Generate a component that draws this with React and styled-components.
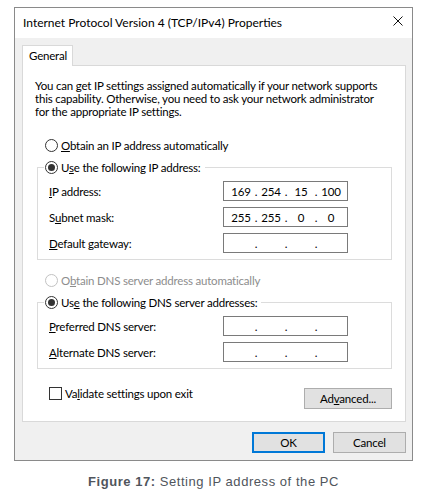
import React from "react";
import styled, { createGlobalStyle } from "styled-components";

const Global = createGlobalStyle`
  html, body { margin: 0; padding: 0; background: #ffffff; }
  body { font-family: Lato, "Noto Sans", sans-serif; }
  * { box-sizing: border-box; }
`;

const Page = styled.div`
  padding-top: 7px;
  display: flex;
  flex-direction: column;
  align-items: center;
`;

const Window = styled.div`
  width: 399px;
  border: 1px solid #8a8a8a;
  background: #f0f0f0;
  font-family: Lato, "Noto Sans", sans-serif;
  font-size: 11.5px;
  letter-spacing: -0.2px;
  color: #000;
  display: flex;
  flex-direction: column;
`;

const TitleBar = styled.div`
  height: 30px;
  background: #fff;
  display: flex;
  align-items: center;
  justify-content: space-between;
  padding: 0 9px 1px 8px;
`;

const Title = styled.span`
  font-family: Lato, "Noto Sans", sans-serif;
  font-size: 12px;
  letter-spacing: 0;
  line-height: 15px;
`;

const Body = styled.div`
  padding: 7px 6px 7px 7px;
  display: flex;
  flex-direction: column;
`;

const TabStrip = styled.div`
  display: flex;
  position: relative;
  z-index: 1;
  margin-bottom: -1px;
`;

const Tab = styled.div`
  width: 51px;
  height: 21px;
  background: #fff;
  border: 1px solid #d9d9d9;
  border-bottom: none;
  padding-left: 6px;
  line-height: 19px;
`;

const Panel = styled.div`
  background: #fff;
  border: 1px solid #d9d9d9;
  padding: 13px 13px 12px 12px;
  display: flex;
  flex-direction: column;
`;

const Intro = styled.p`
  margin: 0;
  line-height: 13px;
  white-space: nowrap;
`;

const RadioRow = styled.label`
  display: flex;
  align-items: center;
  height: 15px;
  margin-top: ${(p) => p.$mt || 0}px;
  margin-left: ${(p) => p.$ml || 0}px;
  color: ${(p) => (p.$disabled ? "#8d8d8d" : "#000")};
  line-height: 15px;
  white-space: nowrap;
`;

const RadioCircle = styled.span`
  width: 13px;
  height: 13px;
  border-radius: 50%;
  border: 1px solid ${(p) => (p.$disabled ? "#c2c2c2" : "#333")};
  background: #fff;
  margin-right: 3px;
  display: flex;
  align-items: center;
  justify-content: center;
  flex: none;
  &::after {
    content: "";
    width: 7px;
    height: 7px;
    border-radius: 50%;
    background: ${(p) => (p.$checked ? "#333" : "transparent")};
  }
`;

const GroupBox = styled.fieldset`
  margin: 7px 0 0 2px;
  padding: 6px 0 6px 0;
  border: 1px solid #dcdcdc;
  min-width: 0;
`;

const Legend = styled.legend`
  margin-left: 6px;
  padding: 0 4px 0 1px;
`;

const FieldGrid = styled.div`
  display: grid;
  grid-template-columns: 174px 125px;
  row-gap: 6px;
  align-items: center;
  margin-left: 11px;
`;

const FieldLabel = styled.span`
  line-height: 15px;
  white-space: nowrap;
`;

const IpBox = styled.div`
  height: 20px;
  border: 1px solid #7a7a7a;
  background: #fff;
  display: flex;
  align-items: center;
  padding-left: 5px;
`;

const Octet = styled.span`
  width: 24px;
  text-align: center;
  line-height: 15px;
`;

const Dot = styled.span`
  width: 6px;
  text-align: center;
  line-height: 15px;
`;

const BottomRow = styled.div`
  display: flex;
  justify-content: space-between;
  align-items: flex-start;
  margin-top: 18px;
  height: 22px;
`;

const CheckRow = styled.label`
  display: flex;
  align-items: center;
  margin-left: 14px;
  height: 13px;
  line-height: 15px;
`;

const CheckBox = styled.span`
  width: 13px;
  height: 13px;
  border: 1px solid #333;
  background: #fff;
  margin-right: 3px;
  flex: none;
`;

const Button = styled.button`
  font-family: inherit;
  font-size: inherit;
  letter-spacing: inherit;
  color: #000;
  width: ${(p) => p.$w}px;
  height: 21px;
  margin-top: ${(p) => p.$mt || 0}px;
  padding: 0;
  background: #e1e1e1;
  border: 1px solid ${(p) => (p.$default ? "#0078d7" : "#adadad")};
  box-shadow: ${(p) => (p.$default ? "inset 0 0 0 1px #0078d7" : "none")};
  line-height: 15px;
`;

const ButtonRow = styled.div`
  display: flex;
  justify-content: flex-end;
  gap: 8px;
  margin-top: 10px;
`;

const Caption = styled.div`
  margin-top: 13px;
  font-family: "Liberation Sans", Arial, sans-serif;
  font-size: 13px;
  letter-spacing: 0.55px;
  line-height: 16px;
  color: #50555c;
  text-align: center;
`;

const CloseIcon = () => (
  <svg width="10" height="10" viewBox="0 0 10 10" style={{ marginTop: -3 }}>
    <path d="M0.5 0.5 L9.5 9.5 M9.5 0.5 L0.5 9.5" stroke="#111" strokeWidth="1" fill="none" />
  </svg>
);

const IpField = ({ value }) => {
  const parts = value || ["", "", "", ""];
  return (
    <IpBox>
      <Octet>{parts[0]}</Octet>
      <Dot>.</Dot>
      <Octet>{parts[1]}</Octet>
      <Dot>.</Dot>
      <Octet>{parts[2]}</Octet>
      <Dot>.</Dot>
      <Octet>{parts[3]}</Octet>
    </IpBox>
  );
};

const Radio = ({ checked, disabled, children, ...rest }) => (
  <RadioRow $disabled={disabled} {...rest}>
    <RadioCircle $checked={checked} $disabled={disabled} />
    <span>{children}</span>
  </RadioRow>
);

export default function App() {
  return (
    <>
      <Global />
      <Page>
        <Window>
          <TitleBar>
            <Title>Internet Protocol Version 4 (TCP/IPv4) Properties</Title>
            <CloseIcon />
          </TitleBar>
          <Body>
            <TabStrip>
              <Tab>General</Tab>
            </TabStrip>
            <Panel>
              <Intro>
                You can get IP settings assigned automatically if your network supports
                <br />
                this capability. Otherwise, you need to ask your network administrator
                <br />
                for the appropriate IP settings.
              </Intro>
              <Radio $mt={20} $ml={10}>
                <u>O</u>btain an IP address automatically
              </Radio>
              <GroupBox>
                <Legend>
                  <Radio checked>
                    U<u>s</u>e the following IP address:
                  </Radio>
                </Legend>
                <FieldGrid>
                  <FieldLabel>
                    <u>I</u>P address:
                  </FieldLabel>
                  <IpField value={["169", "254", "15", "100"]} />
                  <FieldLabel>
                    S<u>u</u>bnet mask:
                  </FieldLabel>
                  <IpField value={["255", "255", "0", "0"]} />
                  <FieldLabel>
                    <u>D</u>efault gateway:
                  </FieldLabel>
                  <IpField />
                </FieldGrid>
              </GroupBox>
              <Radio $mt={13} $ml={10} disabled>
                O<u>b</u>tain DNS server address automatically
              </Radio>
              <GroupBox>
                <Legend>
                  <Radio checked>
                    Us<u>e</u> the following DNS server addresses:
                  </Radio>
                </Legend>
                <FieldGrid>
                  <FieldLabel>
                    <u>P</u>referred DNS server:
                  </FieldLabel>
                  <IpField />
                  <FieldLabel>
                    <u>A</u>lternate DNS server:
                  </FieldLabel>
                  <IpField />
                </FieldGrid>
              </GroupBox>
              <BottomRow>
                <CheckRow>
                  <CheckBox />
                  <span>
                    Va<u>l</u>idate settings upon exit
                  </span>
                </CheckRow>
                <Button $w={88} $mt={1}>
                  Ad<u>v</u>anced...
                </Button>
              </BottomRow>
            </Panel>
            <ButtonRow>
              <Button $w={73} $default>
                OK
              </Button>
              <Button $w={73}>Cancel</Button>
            </ButtonRow>
          </Body>
        </Window>
        <Caption>
          <b>Figure 17:</b> Setting IP address of the PC
        </Caption>
      </Page>
    </>
  );
}
